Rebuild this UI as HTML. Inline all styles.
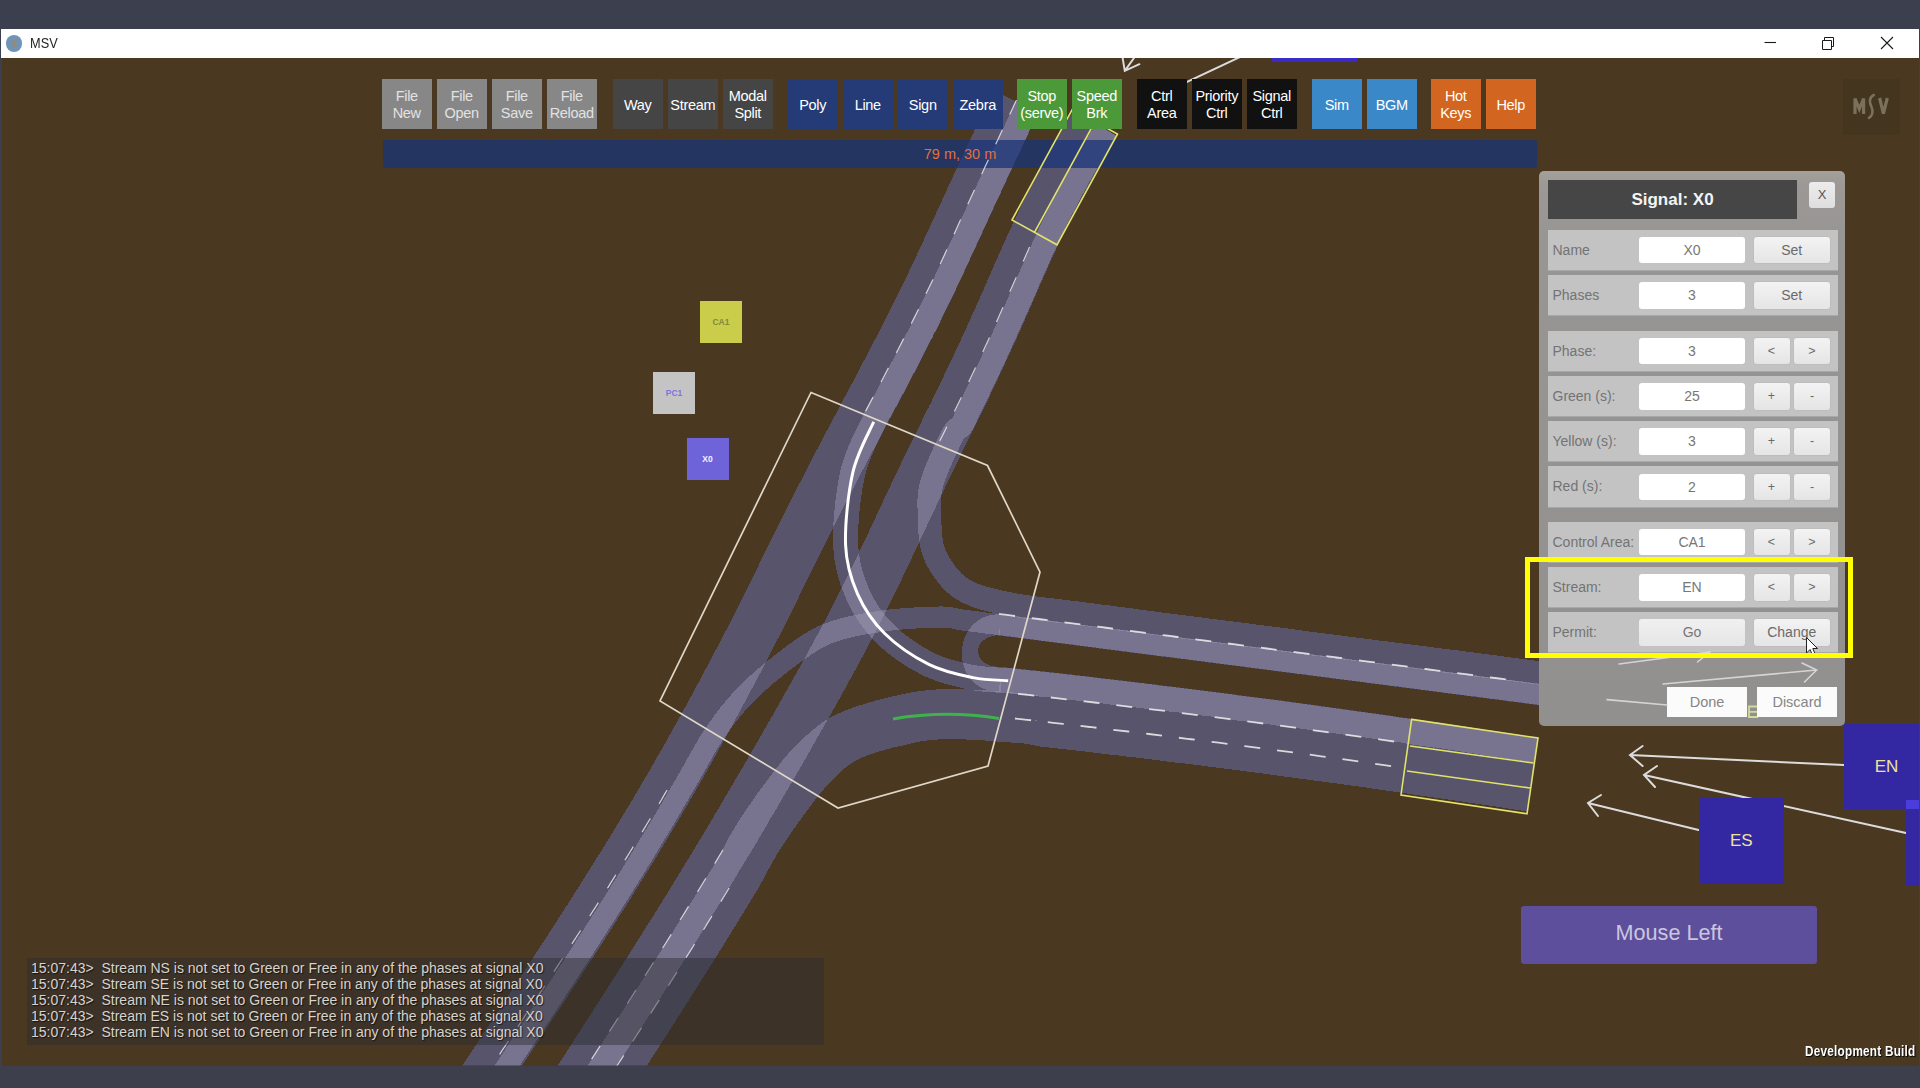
<!DOCTYPE html>
<html><head><meta charset="utf-8">
<style>
*{margin:0;padding:0;box-sizing:border-box}
html,body{width:1920px;height:1088px;overflow:hidden;background:#3c3f4e;font-family:"Liberation Sans",sans-serif}
.abs{position:absolute}
#title{left:1px;top:29px;width:1919px;height:29px;background:#fff}
#game{left:2px;top:58px;width:1917px;height:1007.5px;background:#4a3920;overflow:hidden}
#bottom{left:0;top:1065.5px;width:1920px;height:22.5px;background:#3d404c}
.tb{position:absolute;top:79px;width:49.5px;height:49.5px;padding-top:2.5px;color:#fff;font-size:14.5px;line-height:17px;text-align:center;display:flex;align-items:center;justify-content:center;letter-spacing:-0.3px}
.g1{background:#878787;color:#e2e2e2}
.g2{background:#454545}
.g3{background:#243b78}
.g4{background:#4c993a}
.g5{background:#111111}
.g6{background:#3a88c8}
.g7{background:#d2651f}
#bar{left:383px;top:140px;width:1154px;height:28px;background:rgba(26,52,120,0.75);border-radius:2px}
#bartxt{left:383px;top:140px;width:1154px;height:28px;color:#e0703a;font-size:14.5px;line-height:28px;text-align:center}

#panel{left:1539px;top:171px;width:306px;height:555px;background:linear-gradient(#a39f9b,#9c9895 14px,#989694 60px,#92908e);border-radius:5px}
#ptitle{left:1548px;top:179.5px;width:249px;height:39.5px;background:#474646;color:#f4f4f4;font-weight:bold;font-size:17px;line-height:39.5px;text-align:center}
#pclose{left:1809px;top:181.5px;width:26px;height:26px;background:linear-gradient(#ececec,#dedede);border-radius:3px;color:#555;font-size:13px;line-height:26px;text-align:center}
.row{position:absolute;left:1547.5px;width:290px;height:40.3px;background:#c3c3c3;box-shadow:0 1px 0 #a8a8a8}
.lab{position:absolute;left:5px;top:0;line-height:40.3px;font-size:14px;color:#737373}
.inp{position:absolute;left:91.5px;top:7.3px;width:106px;height:26.5px;background:#fff;border-radius:3px;color:#777;font-size:14px;line-height:26.5px;text-align:center}
.inp.go{background:linear-gradient(#f0f0f0,#e6e6e6)}
.btn{position:absolute;top:7.3px;height:26.5px;background:linear-gradient(#f3f3f3,#e5e5e5);border-radius:3px;color:#6a6a6a;font-size:14px;line-height:26.5px;text-align:center;box-shadow:0 0 0 0.5px #b8b8b8}
.w2{left:206px;width:76.5px}
.b1{left:206px;width:36px;font-size:12.5px}
.b2{left:246.5px;width:36px;font-size:12.5px}
.pb{position:absolute;top:687px;height:30px;width:80px;background:#fbfbfb;color:#868686;font-size:14.5px;line-height:30px;text-align:center}
#hl{left:1525px;top:557px;width:328px;height:101px;border:5.5px solid #ffff00}

.sq{position:absolute;width:42px;height:42px;font-size:8.5px;font-weight:bold;text-align:center;line-height:42px}
.blk{position:absolute;background:#3428a2;color:#ece39e;font-size:17px;text-align:center}
#log{left:26.5px;top:957.5px;width:797.5px;height:87.5px;background:rgba(44,44,50,0.45)}
#logt{left:31px;top:960px;font-size:14px;line-height:16px;color:#d8d4cc;text-shadow:1px 1px 1px rgba(0,0,0,0.6);white-space:pre}
#mouse{left:1521px;top:906px;width:296px;height:58px;background:#5e4f9d;border-radius:3px;color:#cac6de;font-size:21.6px;line-height:53px;text-align:center}
#dev{left:1805px;top:1042.8px;font-size:14.5px;font-weight:bold;color:#fff;transform:scaleX(0.81);transform-origin:0 0;text-shadow:1px 1px 1px #000;white-space:pre;letter-spacing:0.3px}
#logo{left:1843px;top:78.5px;width:57px;height:56px;background:#44351e}
</style></head><body>
<div id="title" class="abs">
  <div class="abs" style="left:4.5px;top:6px;width:16.5px;height:16.5px;border-radius:50%;background:#7094b5"><div style="position:absolute;left:5px;top:5px;width:6.5px;height:6.5px;border-radius:50%;background:#8c8c84"></div></div>
  <div class="abs" style="left:28.5px;top:6px;font-size:14.5px;color:#262626;transform:scaleX(0.88);transform-origin:0 0">MSV</div>
</div>
<div id="game" class="abs"></div>
<!--ROADS--><svg class="abs" style="left:0;top:0" width="1920" height="1088" viewBox="0 0 1920 1088">
<defs>
<clipPath id="gc"><rect x="2" y="58" width="1917" height="1007.5"/></clipPath>
<filter id="lv" filterUnits="userSpaceOnUse" x="0" y="58" width="1920" height="1008" color-interpolation-filters="sRGB">
<feColorMatrix type="matrix" values="0 0 0 1 0  0 0 0 1 0  0 0 0 1 0  0 0 0 0 1"/>
<feComponentTransfer>
<feFuncR type="discrete" tableValues="0.2902 0.2902 0.2902 0.2902 0.2902 0.2902 0.2902 0.2902 0.2902 0.2902 0.2902 0.2902 0.2902 0.2902 0.2902 0.2902 0.2902 0.2902 0.2902 0.2902 0.2902 0.2902 0.2902 0.2902 0.2902 0.3412 0.3412 0.3412 0.3412 0.3412 0.3412 0.3412 0.3412 0.3412 0.3412 0.3412 0.3412 0.3412 0.3412 0.3412 0.3412 0.3412 0.3412 0.3412 0.3412 0.3412 0.3412 0.3412 0.3412 0.3412 0.3412 0.3412 0.3412 0.3412 0.3412 0.3412 0.3412 0.3412 0.3412 0.3412 0.3412 0.3412 0.3412 0.3412 0.4706 0.4706 0.4706 0.4706 0.4706 0.4706 0.4706 0.4706 0.4706 0.4706 0.4706 0.4706 0.4706 0.4706 0.4706 0.4706 0.4706 0.4706 0.4706 0.5412 0.5412 0.5412 0.5412 0.5412 0.5412 0.5412 0.5412 0.5412 0.5412 0.5412 0.5412 0.5412 0.5412 0.5412 0.5412 0.5412"/>
<feFuncG type="discrete" tableValues="0.2235 0.2235 0.2235 0.2235 0.2235 0.2235 0.2235 0.2235 0.2235 0.2235 0.2235 0.2235 0.2235 0.2235 0.2235 0.2235 0.2235 0.2235 0.2235 0.2235 0.2235 0.2235 0.2235 0.2235 0.2235 0.3333 0.3333 0.3333 0.3333 0.3333 0.3333 0.3333 0.3333 0.3333 0.3333 0.3333 0.3333 0.3333 0.3333 0.3333 0.3333 0.3333 0.3333 0.3333 0.3333 0.3333 0.3333 0.3333 0.3333 0.3333 0.3333 0.3333 0.3333 0.3333 0.3333 0.3333 0.3333 0.3333 0.3333 0.3333 0.3333 0.3333 0.3333 0.3333 0.4588 0.4588 0.4588 0.4588 0.4588 0.4588 0.4588 0.4588 0.4588 0.4588 0.4588 0.4588 0.4588 0.4588 0.4588 0.4588 0.4588 0.4588 0.4588 0.5294 0.5294 0.5294 0.5294 0.5294 0.5294 0.5294 0.5294 0.5294 0.5294 0.5294 0.5294 0.5294 0.5294 0.5294 0.5294 0.5294"/>
<feFuncB type="discrete" tableValues="0.1255 0.1255 0.1255 0.1255 0.1255 0.1255 0.1255 0.1255 0.1255 0.1255 0.1255 0.1255 0.1255 0.1255 0.1255 0.1255 0.1255 0.1255 0.1255 0.1255 0.1255 0.1255 0.1255 0.1255 0.1255 0.4235 0.4235 0.4235 0.4235 0.4235 0.4235 0.4235 0.4235 0.4235 0.4235 0.4235 0.4235 0.4235 0.4235 0.4235 0.4235 0.4235 0.4235 0.4235 0.4235 0.4235 0.4235 0.4235 0.4235 0.4235 0.4235 0.4235 0.4235 0.4235 0.4235 0.4235 0.4235 0.4235 0.4235 0.4235 0.4235 0.4235 0.4235 0.4235 0.5647 0.5647 0.5647 0.5647 0.5647 0.5647 0.5647 0.5647 0.5647 0.5647 0.5647 0.5647 0.5647 0.5647 0.5647 0.5647 0.5647 0.5647 0.5647 0.6275 0.6275 0.6275 0.6275 0.6275 0.6275 0.6275 0.6275 0.6275 0.6275 0.6275 0.6275 0.6275 0.6275 0.6275 0.6275 0.6275"/>
</feComponentTransfer>
<feGaussianBlur stdDeviation="0.55"/>
</filter>
</defs>
<g clip-path="url(#gc)">
<g filter="url(#lv)"><g fill="none" stroke="#fff" stroke-opacity="0.52" stroke-linecap="butt" stroke-linejoin="round">
<path d="M1004.7,95.7 C1003.9,97.3 1001.6,102.3 1000.0,105.7 C998.4,109.0 996.9,112.3 995.3,115.7 C993.7,119.0 992.1,122.3 990.6,125.7 C989.0,129.0 987.5,132.3 985.9,135.6 C984.3,139.0 982.8,142.3 981.2,145.6 C979.6,149.0 978.1,152.3 976.5,155.6 C975.0,159.0 973.4,162.3 971.9,165.6 C970.3,169.0 968.7,172.3 967.2,175.7 C965.6,179.0 964.1,182.3 962.6,185.7 C961.0,189.0 959.5,192.3 957.9,195.7 C956.4,199.0 954.9,202.3 953.3,205.7 C951.8,209.0 950.3,212.3 948.7,215.7 C947.2,219.0 945.7,222.3 944.2,225.6 C942.6,229.0 941.1,232.3 939.6,235.6 C938.0,239.0 936.5,242.3 935.0,245.6 C933.4,248.9 931.9,252.2 930.3,255.6 C928.8,258.9 927.2,262.2 925.7,265.5 C924.1,268.8 922.5,272.1 921.0,275.4 C919.4,278.8 917.8,282.1 916.2,285.4 C914.6,288.7 913.0,292.0 911.4,295.3 C909.8,298.6 908.1,301.9 906.5,305.2 C904.8,308.5 903.2,311.9 901.5,315.2 C899.9,318.5 898.2,321.8 896.5,325.1 C894.8,328.4 893.1,331.7 891.4,335.0 C889.7,338.4 888.0,341.7 886.3,345.0 C884.6,348.3 882.8,351.6 881.1,355.0 C879.4,358.3 877.6,361.6 875.9,364.9 C874.1,368.2 872.4,371.6 870.6,374.9 C868.9,378.2 867.1,381.5 865.4,384.9 C863.6,388.2 861.8,391.5 860.1,394.8 C858.3,398.2 856.6,401.5 854.8,404.8 C853.0,408.2 851.3,411.5 849.5,414.8 C847.7,418.2 846.0,421.5 844.2,424.8 C842.4,428.2 840.7,431.5 838.9,434.8 C837.1,438.2 835.4,441.5 833.6,444.8 C831.9,448.2 830.1,451.5 828.4,454.8 C826.6,458.2 824.9,461.5 823.2,464.9 C821.4,468.2 819.7,471.5 818.0,474.9 C816.3,478.2 814.5,481.6 812.8,484.9 C811.1,488.2 809.4,491.6 807.7,494.9 C806.0,498.3 804.3,501.6 802.6,504.9 C800.9,508.3 799.2,511.6 797.5,515.0 C795.9,518.3 794.2,521.6 792.5,525.0 C790.9,528.3 789.2,531.7 787.5,535.0 C785.9,538.3 784.2,541.7 782.6,545.0 C780.9,548.3 779.3,551.7 777.6,555.0 C776.0,558.3 774.4,561.7 772.7,565.0 C771.1,568.3 769.4,571.7 767.8,575.0 C766.2,578.3 764.5,581.6 762.9,585.0 C761.3,588.3 759.6,591.6 758.0,594.9 C756.3,598.3 754.7,601.6 753.0,604.9 C751.3,608.2 749.7,611.5 748.0,614.8 C746.3,618.2 744.6,621.5 743.0,624.8 C741.3,628.1 739.6,631.4 737.9,634.7 C736.1,638.0 734.4,641.4 732.7,644.7 C731.0,648.0 729.3,651.3 727.5,654.6 C725.8,657.9 724.0,661.3 722.3,664.6 C720.5,667.9 718.8,671.2 717.0,674.5 C715.2,677.9 713.4,681.2 711.7,684.5 C709.9,687.8 708.1,691.1 706.3,694.4 C704.5,697.8 702.7,701.1 700.9,704.4 C699.1,707.7 697.3,711.0 695.4,714.4 C693.6,717.7 691.8,721.0 690.0,724.3 C688.1,727.6 686.3,731.0 684.4,734.3 C682.6,737.6 680.7,740.9 678.9,744.2 C677.0,747.5 675.1,750.9 673.3,754.2 C671.4,757.5 669.5,760.8 667.6,764.1 C665.7,767.4 663.8,770.8 661.9,774.1 C660.0,777.4 658.1,780.7 656.1,784.0 C654.2,787.3 652.3,790.6 650.3,794.0 C648.4,797.3 646.4,800.6 644.4,803.9 C642.5,807.2 640.5,810.5 638.5,813.9 C636.5,817.2 634.5,820.5 632.5,823.8 C630.5,827.1 628.5,830.4 626.5,833.8 C624.5,837.1 622.4,840.4 620.4,843.7 C618.4,847.0 616.3,850.3 614.3,853.7 C612.2,857.0 610.1,860.3 608.1,863.6 C606.0,866.9 603.9,870.3 601.9,873.6 C599.8,876.9 597.7,880.2 595.6,883.5 C593.5,886.9 591.4,890.2 589.3,893.5 C587.2,896.8 585.1,900.1 583.0,903.5 C580.9,906.8 578.8,910.1 576.6,913.4 C574.5,916.8 572.4,920.1 570.2,923.4 C568.1,926.7 566.0,930.1 563.8,933.4 C561.7,936.7 559.5,940.0 557.4,943.3 C555.2,946.7 553.1,950.0 550.9,953.3 C548.8,956.6 546.6,960.0 544.4,963.3 C542.3,966.6 540.1,970.0 537.9,973.3 C535.7,976.6 533.6,979.9 531.4,983.3 C529.2,986.6 527.0,989.9 524.9,993.2 C522.7,996.6 520.5,999.9 518.3,1003.2 C516.1,1006.5 513.9,1009.9 511.7,1013.2 C509.6,1016.5 507.4,1019.9 505.2,1023.2 C503.0,1026.5 500.8,1029.8 498.6,1033.2 C496.4,1036.5 494.2,1039.8 492.0,1043.2 C489.8,1046.5 487.6,1049.8 485.5,1053.2 C483.3,1056.5 481.1,1059.8 478.9,1063.1 C476.7,1066.5 474.5,1069.8 472.3,1073.1 C470.1,1076.5 466.8,1081.5 465.7,1083.1" stroke-width="25.0"/>
<path d="M1027.3,106.3 C1026.5,108.0 1024.2,113.0 1022.6,116.3 C1021.0,119.6 1019.5,123.0 1017.9,126.3 C1016.3,129.6 1014.8,133.0 1013.2,136.3 C1011.6,139.6 1010.1,142.9 1008.5,146.3 C1007.0,149.6 1005.4,152.9 1003.8,156.3 C1002.3,159.6 1000.7,162.9 999.2,166.2 C997.6,169.6 996.1,172.9 994.5,176.2 C993.0,179.5 991.4,182.9 989.9,186.2 C988.3,189.5 986.8,192.8 985.2,196.2 C983.7,199.5 982.2,202.8 980.6,206.1 C979.1,209.5 977.6,212.8 976.0,216.1 C974.5,219.4 973.0,222.8 971.5,226.1 C969.9,229.4 968.4,232.8 966.9,236.1 C965.3,239.4 963.8,242.8 962.3,246.1 C960.7,249.4 959.2,252.8 957.6,256.1 C956.1,259.4 954.5,262.8 953.0,266.1 C951.4,269.5 949.9,272.8 948.3,276.2 C946.7,279.5 945.1,282.8 943.5,286.2 C941.9,289.5 940.3,292.9 938.7,296.2 C937.1,299.6 935.5,302.9 933.8,306.3 C932.2,309.6 930.5,313.0 928.9,316.3 C927.2,319.7 925.5,323.0 923.9,326.4 C922.2,329.7 920.5,333.1 918.8,336.4 C917.1,339.8 915.4,343.1 913.7,346.5 C911.9,349.8 910.2,353.2 908.5,356.5 C906.7,359.8 905.0,363.2 903.3,366.5 C901.5,369.9 899.8,373.2 898.0,376.5 C896.3,379.9 894.5,383.2 892.8,386.5 C891.0,389.9 889.2,393.2 887.5,396.6 C885.7,399.9 883.9,403.2 882.2,406.6 C880.4,409.9 878.6,413.2 876.9,416.5 C875.1,419.9 873.3,423.2 871.6,426.5 C869.8,429.9 868.1,433.2 866.3,436.5 C864.5,439.8 862.8,443.2 861.0,446.5 C859.3,449.8 857.5,453.1 855.8,456.5 C854.0,459.8 852.3,463.1 850.5,466.4 C848.8,469.7 847.1,473.1 845.4,476.4 C843.6,479.7 841.9,483.0 840.2,486.4 C838.5,489.7 836.8,493.0 835.1,496.3 C833.4,499.6 831.7,503.0 830.0,506.3 C828.3,509.6 826.6,512.9 824.9,516.2 C823.2,519.6 821.6,522.9 819.9,526.2 C818.2,529.5 816.5,532.8 814.9,536.2 C813.2,539.5 811.6,542.8 809.9,546.1 C808.3,549.4 806.6,552.8 805.0,556.1 C803.3,559.4 801.7,562.7 800.1,566.1 C798.4,569.4 796.8,572.7 795.2,576.0 C793.5,579.4 791.9,582.7 790.2,586.0 C788.6,589.4 787.0,592.7 785.3,596.0 C783.7,599.4 782.0,602.7 780.4,606.1 C778.7,609.4 777.0,612.7 775.4,616.1 C773.7,619.4 772.0,622.8 770.3,626.1 C768.6,629.5 766.9,632.8 765.2,636.1 C763.5,639.5 761.8,642.8 760.1,646.2 C758.4,649.5 756.6,652.9 754.9,656.2 C753.2,659.6 751.4,662.9 749.7,666.2 C747.9,669.6 746.1,672.9 744.4,676.3 C742.6,679.6 740.8,683.0 739.0,686.3 C737.3,689.6 735.5,693.0 733.7,696.3 C731.9,699.7 730.1,703.0 728.3,706.3 C726.5,709.7 724.7,713.0 722.8,716.4 C721.0,719.7 719.2,723.0 717.4,726.4 C715.5,729.7 713.7,733.1 711.8,736.4 C710.0,739.8 708.1,743.1 706.3,746.4 C704.4,749.8 702.5,753.1 700.7,756.5 C698.8,759.8 696.9,763.2 695.0,766.5 C693.1,769.8 691.2,773.2 689.3,776.5 C687.4,779.9 685.5,783.2 683.5,786.6 C681.6,789.9 679.7,793.2 677.7,796.6 C675.8,799.9 673.8,803.3 671.9,806.6 C669.9,810.0 667.9,813.3 665.9,816.7 C663.9,820.0 661.9,823.4 659.9,826.7 C657.9,830.0 655.9,833.4 653.9,836.7 C651.9,840.1 649.9,843.4 647.8,846.8 C645.8,850.1 643.7,853.4 641.7,856.8 C639.6,860.1 637.6,863.5 635.5,866.8 C633.5,870.1 631.4,873.5 629.3,876.8 C627.2,880.2 625.1,883.5 623.1,886.8 C621.0,890.2 618.9,893.5 616.8,896.9 C614.7,900.2 612.6,903.5 610.4,906.9 C608.3,910.2 606.2,913.6 604.1,916.9 C602.0,920.2 599.8,923.6 597.7,926.9 C595.6,930.2 593.4,933.6 591.3,936.9 C589.1,940.3 587.0,943.6 584.8,946.9 C582.7,950.3 580.5,953.6 578.4,956.9 C576.2,960.3 574.0,963.6 571.9,966.9 C569.7,970.3 567.5,973.6 565.4,976.9 C563.2,980.3 561.0,983.6 558.9,986.9 C556.7,990.3 554.5,993.6 552.3,996.9 C550.1,1000.3 548.0,1003.6 545.8,1006.9 C543.6,1010.3 541.4,1013.6 539.2,1016.9 C537.0,1020.3 534.8,1023.6 532.6,1026.9 C530.5,1030.3 528.3,1033.6 526.1,1036.9 C523.9,1040.3 521.7,1043.6 519.5,1046.9 C517.3,1050.3 515.1,1053.6 512.9,1056.9 C510.7,1060.2 508.5,1063.6 506.3,1066.9 C504.1,1070.2 502.0,1073.6 499.8,1076.9 C497.6,1080.2 495.4,1083.5 493.2,1086.9 C491.0,1090.2 487.7,1095.2 486.6,1096.9" stroke-width="25.0"/>
<path d="M1084.3,116.7 C1083.3,118.4 1080.4,123.4 1078.5,126.7 C1076.6,130.0 1074.6,133.4 1072.7,136.7 C1070.8,140.0 1068.9,143.4 1067.0,146.7 C1065.0,150.1 1063.1,153.4 1061.3,156.7 C1059.4,160.1 1057.5,163.4 1055.7,166.8 C1053.8,170.2 1052.0,173.5 1050.1,176.9 C1048.3,180.2 1046.5,183.6 1044.8,187.0 C1043.0,190.3 1041.3,193.7 1039.5,197.1 C1037.8,200.5 1036.2,203.8 1034.5,207.2 C1032.8,210.6 1031.2,213.9 1029.6,217.3 C1028.0,220.7 1026.4,224.0 1024.9,227.4 C1023.3,230.7 1021.8,234.1 1020.2,237.4 C1018.7,240.8 1017.2,244.1 1015.7,247.5 C1014.2,250.8 1012.7,254.2 1011.3,257.5 C1009.8,260.8 1008.3,264.2 1006.9,267.5 C1005.4,270.8 1003.9,274.2 1002.5,277.5 C1001.0,280.8 999.6,284.1 998.1,287.5 C996.7,290.8 995.2,294.1 993.7,297.4 C992.3,300.7 990.8,304.0 989.3,307.3 C987.9,310.6 986.4,313.9 984.9,317.3 C983.4,320.6 981.9,323.9 980.4,327.2 C978.9,330.5 977.4,333.8 975.9,337.1 C974.3,340.4 972.8,343.7 971.3,347.0 C969.8,350.3 968.2,353.7 966.7,357.0 C965.1,360.3 963.6,363.6 962.0,366.9 C960.4,370.2 958.9,373.5 957.3,376.8 C955.7,380.1 954.1,383.4 952.5,386.7 C950.9,390.0 949.3,393.3 947.7,396.7 C946.1,400.0 944.5,403.3 942.9,406.6 C941.2,409.9 939.6,413.2 938.0,416.5 C936.3,419.9 934.7,423.2 933.0,426.5 C931.4,429.8 929.7,433.2 928.1,436.5 C926.5,439.8 924.8,443.1 923.2,446.5 C921.6,449.8 919.9,453.2 918.3,456.5 C916.7,459.8 915.1,463.2 913.5,466.5 C911.9,469.8 910.3,473.2 908.7,476.5 C907.1,479.8 905.5,483.2 903.9,486.5 C902.4,489.8 900.8,493.2 899.2,496.5 C897.7,499.8 896.1,503.2 894.5,506.5 C893.0,509.8 891.4,513.1 889.9,516.4 C888.3,519.8 886.7,523.1 885.2,526.4 C883.6,529.7 882.1,533.1 880.5,536.4 C878.9,539.7 877.4,543.0 875.8,546.3 C874.2,549.6 872.6,552.9 871.1,556.3 C869.5,559.6 867.9,562.9 866.3,566.2 C864.7,569.5 863.1,572.8 861.5,576.1 C859.9,579.4 858.3,582.7 856.6,586.0 C855.0,589.3 853.4,592.6 851.7,595.9 C850.1,599.2 848.4,602.5 846.7,605.8 C845.0,609.1 843.4,612.4 841.6,615.7 C839.9,619.0 838.2,622.3 836.5,625.6 C834.8,628.9 833.0,632.2 831.2,635.5 C829.5,638.8 827.7,642.1 825.9,645.4 C824.1,648.7 822.3,652.0 820.5,655.3 C818.7,658.6 816.9,661.9 815.1,665.3 C813.2,668.6 811.4,671.9 809.6,675.2 C807.7,678.5 805.9,681.8 804.0,685.1 C802.2,688.4 800.3,691.8 798.4,695.1 C796.6,698.4 794.7,701.7 792.8,705.0 C790.9,708.3 789.1,711.7 787.2,715.0 C785.3,718.3 783.4,721.6 781.5,724.9 C779.6,728.2 777.7,731.6 775.8,734.9 C773.9,738.2 772.0,741.5 770.1,744.8 C768.2,748.1 766.3,751.5 764.4,754.8 C762.5,758.1 760.5,761.4 758.6,764.7 C756.7,768.0 754.8,771.4 752.8,774.7 C750.9,778.0 749.0,781.3 747.0,784.6 C745.1,787.9 743.1,791.3 741.2,794.6 C739.2,797.9 737.3,801.2 735.3,804.5 C733.4,807.8 731.4,811.2 729.5,814.5 C727.5,817.8 725.5,821.1 723.6,824.4 C721.6,827.7 719.6,831.1 717.6,834.4 C715.7,837.7 713.7,841.0 711.7,844.3 C709.7,847.6 707.7,850.9 705.7,854.3 C703.7,857.6 701.7,860.9 699.7,864.2 C697.7,867.5 695.7,870.8 693.7,874.1 C691.7,877.5 689.6,880.8 687.6,884.1 C685.6,887.4 683.5,890.7 681.5,894.0 C679.5,897.3 677.4,900.7 675.4,904.0 C673.3,907.3 671.2,910.6 669.2,913.9 C667.1,917.2 665.0,920.6 663.0,923.9 C660.9,927.2 658.8,930.5 656.7,933.8 C654.7,937.1 652.6,940.4 650.5,943.8 C648.4,947.1 646.3,950.4 644.2,953.7 C642.1,957.0 640.0,960.4 637.9,963.7 C635.8,967.0 633.7,970.3 631.6,973.6 C629.4,976.9 627.3,980.3 625.2,983.6 C623.1,986.9 621.0,990.2 618.9,993.5 C616.7,996.9 614.6,1000.2 612.5,1003.5 C610.4,1006.8 608.2,1010.1 606.1,1013.5 C604.0,1016.8 601.8,1020.1 599.7,1023.4 C597.6,1026.8 595.4,1030.1 593.3,1033.4 C591.2,1036.7 589.0,1040.0 586.9,1043.4 C584.8,1046.7 582.6,1050.0 580.5,1053.3 C578.4,1056.7 576.2,1060.0 574.1,1063.3 C572.0,1066.6 569.8,1070.0 567.7,1073.3 C565.6,1076.6 562.4,1081.6 561.3,1083.3" stroke-width="25.0"/>
<path d="M1105.9,129.3 C1104.9,130.9 1102.0,135.9 1100.1,139.2 C1098.2,142.6 1096.3,145.9 1094.4,149.2 C1092.5,152.5 1090.6,155.8 1088.7,159.1 C1086.8,162.4 1084.9,165.7 1083.0,169.0 C1081.2,172.3 1079.4,175.6 1077.5,178.9 C1075.7,182.2 1073.9,185.5 1072.1,188.8 C1070.4,192.0 1068.6,195.3 1066.9,198.6 C1065.2,201.9 1063.5,205.1 1061.8,208.4 C1060.2,211.7 1058.6,215.0 1056.9,218.2 C1055.3,221.5 1053.7,224.8 1052.2,228.1 C1050.6,231.4 1049.1,234.6 1047.5,237.9 C1046.0,241.2 1044.5,244.5 1043.0,247.8 C1041.5,251.1 1040.0,254.4 1038.5,257.7 C1037.0,261.0 1035.6,264.3 1034.1,267.6 C1032.7,270.9 1031.2,274.2 1029.7,277.6 C1028.3,280.9 1026.8,284.2 1025.4,287.5 C1023.9,290.8 1022.5,294.2 1021.0,297.5 C1019.5,300.8 1018.1,304.2 1016.6,307.5 C1015.1,310.8 1013.6,314.2 1012.2,317.5 C1010.7,320.8 1009.2,324.2 1007.7,327.5 C1006.2,330.8 1004.7,334.2 1003.2,337.5 C1001.6,340.9 1000.1,344.2 998.6,347.5 C997.1,350.9 995.5,354.2 994.0,357.5 C992.4,360.9 990.9,364.2 989.3,367.6 C987.8,370.9 986.2,374.2 984.6,377.6 C983.0,380.9 981.5,384.2 979.9,387.6 C978.3,390.9 976.7,394.3 975.1,397.6 C973.4,400.9 971.8,404.3 970.2,407.6 C968.6,410.9 966.9,414.3 965.3,417.6 C963.7,421.0 962.0,424.3 960.4,427.6 C958.7,430.9 957.1,434.3 955.4,437.6 C953.8,440.9 952.2,444.2 950.5,447.5 C948.9,450.9 947.3,454.2 945.6,457.5 C944.0,460.8 942.4,464.1 940.8,467.4 C939.2,470.7 937.6,474.0 936.0,477.3 C934.4,480.6 932.8,483.9 931.3,487.3 C929.7,490.6 928.1,493.9 926.5,497.2 C925.0,500.5 923.4,503.8 921.9,507.2 C920.3,510.5 918.7,513.8 917.2,517.1 C915.6,520.4 914.0,523.8 912.5,527.1 C910.9,530.4 909.4,533.7 907.8,537.1 C906.2,540.4 904.7,543.7 903.1,547.0 C901.5,550.4 900.0,553.7 898.4,557.0 C896.8,560.4 895.2,563.7 893.6,567.0 C892.0,570.4 890.4,573.7 888.8,577.0 C887.2,580.4 885.6,583.7 884.0,587.1 C882.3,590.4 880.7,593.7 879.0,597.1 C877.4,600.4 875.7,603.8 874.1,607.1 C872.4,610.5 870.7,613.8 869.0,617.1 C867.3,620.5 865.6,623.8 863.9,627.2 C862.1,630.5 860.4,633.9 858.6,637.2 C856.9,640.6 855.1,643.9 853.3,647.3 C851.5,650.6 849.7,654.0 847.9,657.3 C846.1,660.6 844.3,664.0 842.5,667.3 C840.6,670.7 838.8,674.0 837.0,677.3 C835.1,680.7 833.3,684.0 831.4,687.3 C829.6,690.7 827.7,694.0 825.8,697.3 C824.0,700.7 822.1,704.0 820.2,707.3 C818.3,710.7 816.5,714.0 814.6,717.3 C812.7,720.7 810.8,724.0 808.9,727.3 C807.0,730.6 805.1,734.0 803.2,737.3 C801.3,740.6 799.4,744.0 797.5,747.3 C795.6,750.6 793.7,754.0 791.8,757.3 C789.9,760.6 787.9,763.9 786.0,767.3 C784.1,770.6 782.2,773.9 780.2,777.3 C778.3,780.6 776.4,783.9 774.4,787.2 C772.5,790.6 770.6,793.9 768.6,797.2 C766.7,800.6 764.7,803.9 762.8,807.2 C760.8,810.6 758.8,813.9 756.9,817.2 C754.9,820.5 753.0,823.9 751.0,827.2 C749.0,830.5 747.0,833.9 745.1,837.2 C743.1,840.5 741.1,843.8 739.1,847.2 C737.1,850.5 735.1,853.8 733.1,857.2 C731.1,860.5 729.1,863.8 727.1,867.2 C725.1,870.5 723.1,873.8 721.1,877.2 C719.1,880.5 717.1,883.8 715.0,887.2 C713.0,890.5 711.0,893.8 708.9,897.1 C706.9,900.5 704.8,903.8 702.8,907.1 C700.7,910.5 698.7,913.8 696.6,917.1 C694.5,920.5 692.5,923.8 690.4,927.1 C688.3,930.5 686.3,933.8 684.2,937.1 C682.1,940.5 680.0,943.8 677.9,947.1 C675.8,950.4 673.7,953.8 671.6,957.1 C669.5,960.4 667.4,963.8 665.3,967.1 C663.2,970.4 661.1,973.7 659.0,977.1 C656.9,980.4 654.8,983.7 652.6,987.1 C650.5,990.4 648.4,993.7 646.3,997.0 C644.2,1000.4 642.0,1003.7 639.9,1007.0 C637.8,1010.3 635.7,1013.7 633.5,1017.0 C631.4,1020.3 629.3,1023.6 627.1,1027.0 C625.0,1030.3 622.9,1033.6 620.7,1036.9 C618.6,1040.3 616.5,1043.6 614.3,1046.9 C612.2,1050.2 610.1,1053.6 607.9,1056.9 C605.8,1060.2 603.7,1063.5 601.5,1066.8 C599.4,1070.2 597.3,1073.5 595.1,1076.8 C593.0,1080.1 590.9,1083.5 588.7,1086.8 C586.6,1090.1 583.4,1095.1 582.4,1096.7" stroke-width="25.0"/>
<path d="M1027.3,106.3 C1026.5,108.0 1024.2,113.0 1022.6,116.3 C1021.1,119.6 1019.5,122.9 1017.9,126.3 C1016.4,129.6 1014.8,132.9 1013.2,136.2 C1011.7,139.5 1010.1,142.9 1008.6,146.2 C1007.0,149.5 1005.4,152.8 1003.9,156.1 C1002.3,159.5 1000.8,162.8 999.2,166.1 C997.7,169.4 996.1,172.7 994.6,176.0 C993.0,179.4 991.5,182.7 990.0,186.0 C988.4,189.3 986.9,192.6 985.3,196.0 C983.8,199.3 982.3,202.6 980.7,205.9 C979.2,209.2 977.7,212.5 976.2,215.9 C974.6,219.2 973.1,222.5 971.6,225.8 C970.1,229.1 968.5,232.5 967.0,235.8 C965.5,239.1 964.0,242.4 962.4,245.8 C960.9,249.1 959.3,252.4 957.8,255.8 C956.3,259.1 954.7,262.4 953.2,265.8 C951.6,269.1 950.0,272.4 948.5,275.8 C946.9,279.1 945.3,282.4 943.7,285.8 C942.1,289.1 940.5,292.5 938.9,295.8 C937.3,299.1 935.7,302.5 934.1,305.8 C932.4,309.2 930.8,312.5 929.1,315.9 C927.5,319.2 925.8,322.5 924.1,325.9 C922.4,329.2 920.8,332.6 919.1,335.9 C917.4,339.2 915.7,342.6 913.9,345.9 C912.2,349.2 910.5,352.6 908.8,355.9 C907.1,359.2 905.3,362.6 903.6,365.9 C901.8,369.2 900.1,372.6 898.4,375.9 C896.6,379.2 894.9,382.6 893.1,385.9 C891.3,389.2 889.6,392.6 887.8,395.9 C886.1,399.2 884.9,401.5 882.5,405.9 C880.2,410.2 878.7,410.7 873.7,421.8 C868.7,432.9 857.5,452.0 852.8,472.6 C848.1,493.2 844.8,525.1 845.6,545.3 C846.4,565.5 851.0,579.1 857.5,593.8 C864.0,608.5 872.8,621.7 884.7,633.5 C896.6,645.3 914.1,657.0 928.8,664.4 C943.5,671.8 959.8,674.9 973.0,677.6 C986.2,680.3 997.0,679.7 1008.2,680.7 C1019.4,681.7 1031.4,682.9 1040.0,683.8 C1048.6,684.7 1053.2,685.3 1059.9,686.0 C1066.5,686.8 1073.1,687.6 1079.7,688.3 C1086.3,689.1 1093.0,689.9 1099.6,690.6 C1106.2,691.4 1112.8,692.2 1119.5,693.0 C1126.1,693.8 1132.7,694.6 1139.3,695.4 C1145.9,696.2 1152.6,697.0 1159.2,697.8 C1165.8,698.6 1172.4,699.4 1179.0,700.2 C1185.7,701.1 1192.3,701.9 1198.9,702.7 C1205.5,703.6 1212.2,704.4 1218.8,705.2 C1225.4,706.1 1232.0,706.9 1238.6,707.8 C1245.3,708.7 1251.9,709.5 1258.5,710.4 C1265.1,711.3 1271.7,712.1 1278.4,713.0 C1285.0,713.9 1291.6,714.8 1298.2,715.7 C1304.8,716.6 1311.5,717.5 1318.1,718.4 C1324.7,719.3 1331.3,720.2 1338.0,721.1 C1344.6,722.0 1351.2,722.9 1357.8,723.8 C1364.4,724.8 1371.1,725.7 1377.7,726.6 C1384.3,727.6 1390.9,728.5 1397.5,729.5 C1404.2,730.4 1410.8,731.4 1417.4,732.3 C1424.0,733.3 1430.6,734.3 1437.3,735.2 C1443.9,736.2 1450.5,737.2 1457.1,738.2 C1463.8,739.1 1470.4,740.1 1477.0,741.1 C1483.6,742.1 1490.2,743.1 1496.9,744.1 C1503.5,745.1 1510.1,746.1 1516.7,747.2 C1523.3,748.2 1533.3,749.7 1536.6,750.2" stroke-width="25.0"/>
<path d="M1560.0,675.6 C1556.7,675.2 1547.0,673.9 1540.4,673.1 C1533.9,672.2 1527.4,671.4 1520.9,670.6 C1514.3,669.7 1507.8,668.9 1501.3,668.0 C1494.8,667.2 1488.3,666.4 1481.7,665.5 C1475.2,664.7 1468.7,663.8 1462.2,663.0 C1455.7,662.1 1449.1,661.3 1442.6,660.5 C1436.1,659.6 1429.6,658.8 1423.0,657.9 C1416.5,657.1 1410.0,656.2 1403.5,655.4 C1397.0,654.6 1390.4,653.7 1383.9,652.9 C1377.4,652.0 1370.9,651.2 1364.3,650.4 C1357.8,649.5 1351.3,648.7 1344.8,647.8 C1338.3,647.0 1331.7,646.1 1325.2,645.3 C1318.7,644.5 1312.2,643.6 1305.7,642.8 C1299.1,641.9 1292.6,641.1 1286.1,640.2 C1279.6,639.4 1273.0,638.6 1266.5,637.7 C1260.0,636.9 1253.5,636.0 1247.0,635.2 C1240.4,634.3 1233.9,633.5 1227.4,632.7 C1220.9,631.8 1214.3,631.0 1207.8,630.1 C1201.3,629.3 1194.8,628.5 1188.3,627.6 C1181.7,626.8 1175.2,625.9 1168.7,625.1 C1162.2,624.2 1155.7,623.4 1149.1,622.6 C1142.6,621.7 1136.1,620.9 1129.6,620.0 C1123.0,619.2 1118.3,618.6 1110.0,617.5 C1101.7,616.4 1095.3,615.6 1080.0,613.6 C1064.7,611.6 1034.9,608.5 1018.0,605.6 C1001.1,602.7 988.6,599.9 978.4,596.5 C968.2,593.1 963.1,590.2 956.8,585.1 C950.5,580.0 944.7,572.3 940.6,565.8 C936.5,559.3 933.9,554.5 932.0,546.0 C930.1,537.5 929.6,525.3 929.5,515.0 C929.4,504.7 927.8,497.2 931.5,484.0 C935.2,470.8 947.0,445.7 952.0,436.0 C957.0,426.3 959.0,428.9 961.4,425.5 C963.8,422.1 964.7,418.9 966.3,415.6 C967.9,412.3 969.5,409.0 971.1,405.7 C972.8,402.4 974.4,399.0 976.0,395.7 C977.6,392.4 979.1,389.1 980.7,385.8 C982.3,382.5 983.9,379.1 985.4,375.8 C987.0,372.5 988.6,369.2 990.1,365.9 C991.6,362.6 993.2,359.3 994.7,355.9 C996.2,352.6 997.8,349.3 999.3,346.0 C1000.8,342.7 1002.3,339.4 1003.8,336.1 C1005.3,332.7 1006.8,329.4 1008.3,326.1 C1009.8,322.8 1011.3,319.5 1012.7,316.2 C1014.2,312.9 1015.7,309.6 1017.2,306.2 C1018.6,302.9 1020.1,299.6 1021.5,296.3 C1023.0,293.0 1024.4,289.7 1025.9,286.4 C1027.3,283.1 1028.7,279.8 1030.2,276.5 C1031.6,273.2 1033.1,269.9 1034.5,266.7 C1036.0,263.4 1037.5,260.1 1038.9,256.8 C1040.4,253.5 1041.9,250.3 1043.4,247.0 C1044.9,243.7 1046.4,240.4 1047.9,237.2 C1049.4,233.9 1050.9,230.6 1052.5,227.4 C1054.1,224.1 1055.6,220.9 1057.2,217.6 C1058.8,214.4 1060.5,211.1 1062.1,207.9 C1063.8,204.6 1065.5,201.4 1067.2,198.1 C1068.9,194.9 1070.6,191.6 1072.4,188.3 C1074.1,185.1 1075.9,181.8 1077.7,178.5 C1079.5,175.3 1081.4,172.0 1083.2,168.7 C1085.0,165.5 1086.9,162.2 1088.8,158.9 C1090.7,155.6 1092.5,152.3 1094.4,149.0 C1096.3,145.8 1098.2,142.5 1100.2,139.2 C1102.1,135.9 1104.9,130.9 1105.9,129.3" stroke-width="23.5"/>
<path d="M1560.0,697.1 C1556.8,696.7 1547.1,695.4 1540.6,694.6 C1534.2,693.8 1527.7,693.0 1521.3,692.1 C1514.8,691.3 1508.4,690.5 1501.9,689.6 C1495.5,688.8 1489.0,688.0 1482.6,687.1 C1476.1,686.3 1469.7,685.5 1463.2,684.6 C1456.8,683.8 1450.3,683.0 1443.9,682.1 C1437.4,681.3 1431.0,680.5 1424.5,679.6 C1418.1,678.8 1411.6,678.0 1405.2,677.1 C1398.7,676.3 1392.3,675.5 1385.8,674.6 C1379.4,673.8 1372.9,673.0 1366.5,672.1 C1360.0,671.3 1353.5,670.5 1347.1,669.6 C1340.6,668.8 1334.2,668.0 1327.7,667.1 C1321.3,666.3 1314.8,665.5 1308.4,664.6 C1301.9,663.8 1295.5,663.0 1289.0,662.1 C1282.6,661.3 1276.1,660.5 1269.7,659.6 C1263.2,658.8 1256.8,658.0 1250.3,657.1 C1243.9,656.3 1237.4,655.5 1231.0,654.6 C1224.5,653.8 1218.1,653.0 1211.6,652.1 C1205.2,651.3 1198.7,650.5 1192.3,649.6 C1185.8,648.8 1179.4,648.0 1172.9,647.1 C1166.5,646.3 1160.0,645.5 1153.5,644.6 C1147.1,643.8 1140.6,643.0 1134.2,642.1 C1127.7,641.3 1121.3,640.5 1114.8,639.6 C1108.4,638.8 1101.9,638.0 1095.5,637.1 C1089.0,636.3 1082.6,635.5 1076.1,634.6 C1069.7,633.8 1063.2,633.0 1056.8,632.1 C1050.3,631.3 1043.9,630.5 1037.4,629.6 C1031.0,628.8 1024.5,628.0 1018.1,627.1 C1011.6,626.3 1005.2,625.5 998.7,624.6 C992.3,623.8 985.8,623.0 979.4,622.1 C972.9,621.3 966.6,620.5 960.0,619.6 C953.4,618.8 953.3,616.7 940.0,617.1 C926.7,617.4 899.1,618.6 880.0,621.5 C860.9,624.4 842.1,627.3 825.4,634.5 C808.6,641.7 793.3,654.2 779.5,664.8 C765.7,675.3 753.5,686.5 742.7,697.8 C732.0,709.1 722.9,721.3 715.0,732.7 C707.1,744.1 699.4,759.0 695.2,766.2 C691.0,773.4 691.5,772.7 689.7,775.9 C687.8,779.2 685.9,782.4 684.1,785.7 C682.2,788.9 680.3,792.2 678.4,795.4 C676.5,798.7 674.6,801.9 672.7,805.2 C670.8,808.4 668.9,811.7 667.0,814.9 C665.0,818.2 663.1,821.4 661.2,824.6 C659.2,827.9 657.3,831.1 655.3,834.4 C653.4,837.6 651.4,840.9 649.4,844.1 C647.4,847.4 645.5,850.6 643.5,853.9 C641.5,857.1 639.5,860.4 637.5,863.6 C635.5,866.9 633.5,870.1 631.5,873.4 C629.5,876.6 627.4,879.8 625.4,883.1 C623.4,886.3 621.3,889.6 619.3,892.8 C617.3,896.1 615.2,899.3 613.2,902.6 C611.1,905.8 609.1,909.0 607.0,912.3 C604.9,915.5 602.9,918.8 600.8,922.0 C598.7,925.3 596.7,928.5 594.6,931.7 C592.5,935.0 590.4,938.2 588.3,941.5 C586.3,944.7 584.2,948.0 582.1,951.2 C580.0,954.4 577.9,957.7 575.8,960.9 C573.7,964.2 571.6,967.4 569.5,970.6 C567.4,973.9 565.3,977.1 563.2,980.4 C561.0,983.6 558.9,986.8 556.8,990.1 C554.7,993.3 552.6,996.6 550.5,999.8 C548.3,1003.0 546.2,1006.3 544.1,1009.5 C542.0,1012.7 539.8,1016.0 537.7,1019.2 C535.6,1022.5 533.5,1025.7 531.3,1028.9 C529.2,1032.2 527.1,1035.4 524.9,1038.6 C522.8,1041.9 520.7,1045.1 518.6,1048.3 C516.4,1051.6 514.3,1054.8 512.2,1058.1 C510.0,1061.3 507.9,1064.5 505.8,1067.8 C503.6,1071.0 501.5,1074.2 499.4,1077.5 C497.3,1080.7 495.1,1083.9 493.0,1087.2 C490.9,1090.4 487.7,1095.2 486.6,1096.9" stroke-width="21.0"/>
<path d="M582.4,1096.7 C583.4,1095.1 586.5,1090.4 588.5,1087.2 C590.5,1084.0 592.6,1080.8 594.6,1077.6 C596.7,1074.4 598.7,1071.2 600.8,1068.0 C602.8,1064.8 604.9,1061.6 606.9,1058.4 C609.0,1055.2 611.1,1052.0 613.1,1048.8 C615.2,1045.6 617.2,1042.4 619.3,1039.3 C621.3,1036.1 623.4,1032.9 625.4,1029.7 C627.5,1026.5 629.5,1023.3 631.6,1020.1 C633.6,1016.9 635.6,1013.7 637.7,1010.5 C639.7,1007.3 641.8,1004.1 643.8,1000.9 C645.9,997.7 647.9,994.5 649.9,991.3 C652.0,988.1 654.0,984.9 656.0,981.7 C658.1,978.5 660.1,975.3 662.1,972.1 C664.2,968.9 666.2,965.7 668.2,962.5 C670.2,959.3 672.3,956.1 674.3,952.9 C676.3,949.7 678.3,946.5 680.3,943.3 C682.3,940.1 684.3,936.9 686.3,933.7 C688.3,930.5 690.3,927.3 692.3,924.1 C694.3,920.9 696.3,917.7 698.2,914.5 C700.2,911.3 702.2,908.1 704.2,904.9 C706.1,901.7 708.1,898.5 710.1,895.3 C712.0,892.1 714.0,888.9 715.9,885.7 C717.9,882.5 719.8,879.3 721.8,876.1 C723.7,872.9 723.4,873.8 727.6,866.5 C731.7,859.1 739.0,844.3 746.7,831.9 C754.4,819.6 764.3,805.2 773.7,792.5 C783.1,779.9 792.2,767.1 803.1,756.2 C814.0,745.3 824.4,734.7 839.2,726.9 C854.0,719.1 874.5,713.6 892.1,709.3 C909.6,705.1 923.0,702.1 944.5,701.5 C965.9,700.9 1004.7,704.3 1020.7,705.5 C1036.6,706.7 1033.5,707.9 1040.0,708.8 C1046.5,709.7 1053.1,710.3 1059.7,711.0 C1066.3,711.8 1072.8,712.5 1079.4,713.3 C1086.0,714.0 1092.5,714.8 1099.1,715.6 C1105.7,716.4 1112.3,717.1 1118.8,717.9 C1125.4,718.7 1132.0,719.5 1138.5,720.3 C1145.1,721.1 1151.7,721.9 1158.2,722.7 C1164.8,723.5 1171.4,724.3 1177.9,725.1 C1184.5,725.9 1191.1,726.7 1197.6,727.6 C1204.2,728.4 1210.8,729.2 1217.3,730.1 C1223.9,730.9 1230.5,731.7 1237.1,732.6 C1243.6,733.4 1250.2,734.3 1256.8,735.2 C1263.3,736.0 1269.9,736.9 1276.5,737.8 C1283.0,738.6 1289.6,739.5 1296.2,740.4 C1302.7,741.3 1309.3,742.2 1315.9,743.1 C1322.4,743.9 1329.0,744.8 1335.6,745.8 C1342.2,746.7 1348.7,747.6 1355.3,748.5 C1361.9,749.4 1368.4,750.3 1375.0,751.3 C1381.6,752.2 1388.1,753.1 1394.7,754.1 C1401.3,755.0 1407.8,755.9 1414.4,756.9 C1421.0,757.8 1427.5,758.8 1434.1,759.8 C1440.7,760.7 1447.2,761.7 1453.8,762.7 C1460.4,763.6 1467.0,764.6 1473.5,765.6 C1480.1,766.6 1486.7,767.6 1493.2,768.6 C1499.8,769.6 1506.4,770.6 1512.9,771.6 C1519.5,772.6 1529.4,774.1 1532.6,774.6" stroke-width="25.0"/>
<path d="M603.4,1110.2 C604.4,1108.6 607.5,1103.8 609.5,1100.7 C611.6,1097.5 613.6,1094.3 615.7,1091.1 C617.7,1087.9 619.8,1084.7 621.8,1081.5 C623.9,1078.3 625.9,1075.1 628.0,1071.9 C630.0,1068.7 632.1,1065.5 634.1,1062.3 C636.2,1059.2 638.2,1056.0 640.3,1052.8 C642.3,1049.6 644.4,1046.4 646.5,1043.2 C648.5,1040.0 650.6,1036.8 652.6,1033.6 C654.7,1030.4 656.7,1027.2 658.8,1024.0 C660.8,1020.8 662.8,1017.6 664.9,1014.3 C666.9,1011.1 669.0,1007.9 671.0,1004.7 C673.1,1001.5 675.1,998.3 677.1,995.1 C679.2,991.9 681.2,988.7 683.3,985.5 C685.3,982.3 687.3,979.1 689.3,975.9 C691.4,972.7 693.4,969.4 695.4,966.2 C697.4,963.0 699.5,959.8 701.5,956.6 C703.5,953.4 705.5,950.2 707.5,946.9 C709.5,943.7 711.5,940.5 713.5,937.3 C715.5,934.1 717.5,930.9 719.5,927.6 C721.5,924.4 723.5,921.2 725.5,918.0 C727.4,914.8 729.4,911.5 731.4,908.3 C733.4,905.1 735.3,901.9 737.3,898.7 C739.2,895.4 741.2,892.2 743.1,889.0 C745.1,885.8 744.9,886.5 749.0,879.4 C753.0,872.2 759.9,858.0 767.3,846.1 C774.8,834.1 784.8,819.5 793.7,807.5 C802.7,795.4 811.4,783.5 820.9,773.8 C830.4,764.1 838.0,755.8 850.8,749.1 C863.6,742.4 882.2,737.4 897.9,733.7 C913.6,729.9 924.9,727.0 945.1,726.5 C965.4,726.0 1003.5,729.3 1019.3,730.5 C1035.1,731.7 1033.3,732.9 1040.0,733.8 C1046.7,734.7 1053.0,735.3 1059.5,736.0 C1066.1,736.8 1072.6,737.5 1079.1,738.3 C1085.6,739.0 1092.1,739.8 1098.6,740.5 C1105.2,741.3 1111.7,742.1 1118.2,742.8 C1124.7,743.6 1131.2,744.4 1137.7,745.2 C1144.3,746.0 1150.8,746.8 1157.3,747.6 C1163.8,748.4 1170.3,749.2 1176.8,750.0 C1183.3,750.8 1189.9,751.6 1196.4,752.4 C1202.9,753.2 1209.4,754.0 1215.9,754.9 C1222.4,755.7 1229.0,756.5 1235.5,757.4 C1242.0,758.2 1248.5,759.1 1255.0,759.9 C1261.5,760.8 1268.1,761.6 1274.6,762.5 C1281.1,763.4 1287.6,764.2 1294.1,765.1 C1300.6,766.0 1307.1,766.9 1313.7,767.8 C1320.2,768.6 1326.7,769.5 1333.2,770.4 C1339.7,771.3 1346.2,772.2 1352.8,773.1 C1359.3,774.0 1365.8,775.0 1372.3,775.9 C1378.8,776.8 1385.3,777.7 1391.9,778.6 C1398.4,779.6 1404.9,780.5 1411.4,781.5 C1417.9,782.4 1424.4,783.3 1431.0,784.3 C1437.5,785.2 1444.0,786.2 1450.5,787.2 C1457.0,788.1 1463.5,789.1 1470.0,790.1 C1476.6,791.1 1483.1,792.0 1489.6,793.0 C1496.1,794.0 1502.6,795.0 1509.1,796.0 C1515.7,797.0 1525.4,798.5 1528.7,799.0" stroke-width="25.0"/>
<path d="M1560.0,697.1 C1556.8,696.7 1547.1,695.5 1540.7,694.6 C1534.3,693.8 1527.8,693.0 1521.4,692.1 C1514.9,691.3 1508.5,690.5 1502.1,689.6 C1495.6,688.8 1489.2,688.0 1482.8,687.1 C1476.3,686.3 1469.9,685.5 1463.4,684.6 C1457.0,683.8 1450.6,683.0 1444.1,682.2 C1437.7,681.3 1431.3,680.5 1424.8,679.7 C1418.4,678.8 1412.0,678.0 1405.5,677.2 C1399.1,676.3 1392.6,675.5 1386.2,674.7 C1379.8,673.8 1373.3,673.0 1366.9,672.2 C1360.5,671.3 1354.0,670.5 1347.6,669.7 C1341.1,668.9 1334.7,668.0 1328.3,667.2 C1321.8,666.4 1315.4,665.5 1309.0,664.7 C1302.5,663.9 1296.1,663.0 1289.7,662.2 C1283.2,661.4 1276.8,660.5 1270.3,659.7 C1263.9,658.9 1257.5,658.0 1251.0,657.2 C1244.6,656.4 1238.2,655.6 1231.7,654.7 C1225.3,653.9 1218.9,653.1 1212.4,652.2 C1206.0,651.4 1199.5,650.6 1193.1,649.7 C1186.7,648.9 1180.2,648.1 1173.8,647.2 C1167.4,646.4 1160.9,645.6 1154.5,644.8 C1148.0,643.9 1141.6,643.1 1135.2,642.3 C1128.7,641.4 1122.3,640.6 1115.9,639.8 C1109.4,638.9 1103.0,638.1 1096.6,637.3 C1090.1,636.4 1083.7,635.6 1077.2,634.8 C1070.8,633.9 1064.4,633.1 1057.9,632.3 C1051.5,631.5 1045.1,630.6 1038.6,629.8 C1032.2,629.0 1025.7,628.1 1019.3,627.3 C1012.9,626.5 1003.2,625.2 1000.0,624.8" stroke-width="21"/>
<path d="M1000.5,614.3 L1000,614.3 C949.3,614.3 949.3,691.9 1000,691.9 L1000.5,691.9 L1000.5,666.9 L1000,666.9 C970.7,666.9 970.7,635.3 1000,635.3 L1000.5,635.3 Z" stroke="none" fill="#fff" fill-opacity="0.52"/>
<path d="M1000.0,679.4 C1003.3,679.7 1013.2,680.8 1019.9,681.6 C1026.5,682.3 1033.1,683.0 1039.7,683.8 C1046.4,684.5 1053.0,685.3 1059.6,686.0 C1066.2,686.8 1072.9,687.5 1079.5,688.3 C1086.1,689.1 1092.7,689.8 1099.4,690.6 C1106.0,691.4 1112.6,692.2 1119.2,693.0 C1125.9,693.7 1132.5,694.5 1139.1,695.3 C1145.7,696.1 1152.4,696.9 1159.0,697.8 C1165.6,698.6 1172.2,699.4 1178.9,700.2 C1185.5,701.0 1192.1,701.9 1198.7,702.7 C1205.4,703.5 1212.0,704.4 1218.6,705.2 C1225.2,706.1 1231.9,706.9 1238.5,707.8 C1245.1,708.6 1251.7,709.5 1258.4,710.4 C1265.0,711.2 1271.6,712.1 1278.2,713.0 C1284.9,713.9 1291.5,714.8 1298.1,715.6 C1304.7,716.5 1311.4,717.4 1318.0,718.3 C1324.6,719.2 1331.2,720.2 1337.9,721.1 C1344.5,722.0 1351.1,722.9 1357.7,723.8 C1364.4,724.8 1371.0,725.7 1377.6,726.6 C1384.2,727.6 1390.8,728.5 1397.5,729.5 C1404.1,730.4 1410.7,731.4 1417.3,732.3 C1424.0,733.3 1430.6,734.2 1437.2,735.2 C1443.8,736.2 1450.5,737.2 1457.1,738.1 C1463.7,739.1 1470.3,740.1 1477.0,741.1 C1483.6,742.1 1490.2,743.1 1496.8,744.1 C1503.5,745.1 1510.1,746.1 1516.7,747.2 C1523.3,748.2 1533.3,749.7 1536.6,750.2" stroke-width="25"/>
</g></g>
</g></svg>
<div id="bar" class="abs"></div>
<svg class="abs" style="left:0;top:0" width="1920" height="1088" viewBox="0 0 1920 1088">
<g clip-path="url(#gc)">
<g fill="none" stroke="#f0f0f0" stroke-opacity="0.8" stroke-width="1.2" stroke-dasharray="16 17">
<path d="M1016.5,100.0 C1015.7,101.7 1013.4,106.6 1011.8,109.9 C1010.2,113.2 1008.7,116.6 1007.1,119.9 C1005.6,123.2 1004.0,126.5 1002.4,129.8 C1000.9,133.1 999.3,136.4 997.8,139.8 C996.2,143.1 994.7,146.4 993.1,149.7 C991.6,153.0 990.0,156.3 988.5,159.6 C986.9,162.9 985.4,166.2 983.8,169.6 C982.3,172.9 980.7,176.2 979.2,179.5 C977.7,182.8 976.1,186.1 974.6,189.4 C973.0,192.8 971.5,196.1 970.0,199.4 C968.5,202.7 966.9,206.0 965.4,209.3 C963.9,212.6 962.4,215.9 960.8,219.2 C959.3,222.6 957.8,225.9 956.3,229.2 C954.8,232.5 953.2,235.8 951.7,239.1 C950.2,242.4 948.7,245.8 947.1,249.1 C945.6,252.4 944.1,255.7 942.5,259.0 C941.0,262.3 939.4,265.6 937.9,268.9 C936.3,272.2 934.7,275.6 933.2,278.9 C931.6,282.2 930.0,285.5 928.4,288.8 C926.8,292.1 925.2,295.4 923.6,298.8 C922.0,302.1 920.4,305.4 918.7,308.7 C917.1,312.0 915.4,315.3 913.8,318.6 C912.1,321.9 910.4,325.2 908.8,328.6 C907.1,331.9 905.4,335.2 903.7,338.5 C902.0,341.8 900.3,345.1 898.6,348.4 C896.9,351.8 895.1,355.1 893.4,358.4 C891.7,361.7 890.0,365.0 888.2,368.3 C886.5,371.6 884.7,374.9 883.0,378.2 C881.3,381.6 879.5,384.9 877.8,388.2 C876.0,391.5 874.2,394.8 872.5,398.1 C870.7,401.4 869.0,404.8 867.2,408.1 C865.5,411.4 862.8,416.3 862.0,418.0"/>
<path d="M1029.6,247.0 C1028.9,248.6 1026.7,253.4 1025.3,256.7 C1023.9,259.9 1022.4,263.1 1021.0,266.3 C1019.6,269.6 1018.2,272.8 1016.8,276.0 C1015.4,279.2 1014.0,282.4 1012.5,285.7 C1011.1,288.9 1009.7,292.1 1008.3,295.3 C1006.9,298.6 1005.5,301.8 1004.0,305.0 C1002.6,308.2 1001.2,311.4 999.7,314.7 C998.3,317.9 996.9,321.1 995.4,324.3 C993.9,327.6 992.5,330.8 991.0,334.0 C989.6,337.2 988.1,340.4 986.6,343.7 C985.1,346.9 983.6,350.1 982.2,353.3 C980.7,356.6 979.2,359.8 977.7,363.0 C976.1,366.2 974.6,369.4 973.1,372.7 C971.6,375.9 970.1,379.1 968.5,382.3 C967.0,385.6 965.4,388.8 963.9,392.0 C962.3,395.2 960.8,398.4 959.2,401.7 C957.6,404.9 956.0,408.1 954.5,411.3 C952.9,414.6 951.3,417.8 949.7,421.0 C948.1,424.2 946.5,427.4 944.9,430.7 C943.3,433.9 941.7,437.1 940.1,440.3 C938.6,443.6 936.2,448.4 935.4,450.0"/>
<path d="M667.1,790.0 C666.2,791.6 663.3,796.4 661.5,799.7 C659.6,802.9 657.7,806.1 655.8,809.3 C653.8,812.5 651.9,815.7 650.0,819.0 C648.1,822.2 646.1,825.4 644.2,828.6 C642.3,831.8 640.3,835.1 638.4,838.3 C636.4,841.5 634.4,844.7 632.5,847.9 C630.5,851.1 628.5,854.4 626.5,857.6 C624.5,860.8 622.5,864.0 620.6,867.2 C618.6,870.5 616.5,873.7 614.5,876.9 C612.5,880.1 610.5,883.3 608.5,886.6 C606.5,889.8 604.4,893.0 602.4,896.2 C600.4,899.4 598.3,902.6 596.3,905.9 C594.2,909.1 592.2,912.3 590.1,915.5 C588.1,918.7 586.0,922.0 584.0,925.2 C581.9,928.4 579.8,931.6 577.8,934.8 C575.7,938.0 573.6,941.3 571.5,944.5 C569.5,947.7 567.4,950.9 565.3,954.1 C563.2,957.4 561.1,960.6 559.0,963.8 C556.9,967.0 554.8,970.2 552.7,973.4 C550.6,976.7 548.5,979.9 546.4,983.1 C544.3,986.3 542.2,989.5 540.1,992.8 C538.0,996.0 535.9,999.2 533.8,1002.4 C531.7,1005.6 529.6,1008.9 527.5,1012.1 C525.3,1015.3 523.2,1018.5 521.1,1021.7 C519.0,1024.9 516.9,1028.2 514.8,1031.4 C512.6,1034.6 510.5,1037.8 508.4,1041.0 C506.3,1044.3 504.2,1047.5 502.0,1050.7 C499.9,1053.9 497.8,1057.1 495.7,1060.3 C493.6,1063.6 490.4,1068.4 489.3,1070.0"/>
<path d="M722.9,850.0 C721.9,851.6 719.0,856.4 717.1,859.6 C715.2,862.8 713.3,865.9 711.3,869.1 C709.4,872.3 707.5,875.5 705.5,878.7 C703.6,881.9 701.7,885.1 699.7,888.3 C697.8,891.4 695.8,894.6 693.8,897.8 C691.9,901.0 689.9,904.2 687.9,907.4 C686.0,910.6 684.0,913.8 682.0,917.0 C680.0,920.1 678.0,923.3 676.1,926.5 C674.1,929.7 672.1,932.9 670.1,936.1 C668.1,939.3 666.1,942.5 664.1,945.7 C662.1,948.8 660.0,952.0 658.0,955.2 C656.0,958.4 654.0,961.6 652.0,964.8 C650.0,968.0 647.9,971.2 645.9,974.3 C643.9,977.5 641.9,980.7 639.8,983.9 C637.8,987.1 635.8,990.3 633.7,993.5 C631.7,996.7 629.7,999.9 627.6,1003.0 C625.6,1006.2 623.5,1009.4 621.5,1012.6 C619.5,1015.8 617.4,1019.0 615.4,1022.2 C613.3,1025.4 611.3,1028.6 609.2,1031.7 C607.2,1034.9 605.1,1038.1 603.1,1041.3 C601.0,1044.5 599.0,1047.7 596.9,1050.9 C594.9,1054.1 592.8,1057.2 590.8,1060.4 C588.8,1063.6 585.7,1068.4 584.7,1070.0"/>
<path d="M729.2,888.0 C728.2,889.6 725.2,894.5 723.2,897.8 C721.2,901.0 719.2,904.3 717.2,907.6 C715.2,910.8 713.2,914.1 711.2,917.4 C709.1,920.6 707.1,923.9 705.1,927.2 C703.1,930.4 701.0,933.7 699.0,937.0 C697.0,940.2 694.9,943.5 692.9,946.8 C690.8,950.0 688.8,953.3 686.7,956.6 C684.7,959.8 682.6,963.1 680.6,966.3 C678.5,969.6 676.5,972.9 674.4,976.1 C672.3,979.4 670.3,982.6 668.2,985.9 C666.1,989.2 664.0,992.4 662.0,995.7 C659.9,998.9 657.8,1002.2 655.7,1005.4 C653.7,1008.7 651.6,1012.0 649.5,1015.2 C647.4,1018.5 645.3,1021.7 643.3,1025.0 C641.2,1028.2 639.1,1031.5 637.0,1034.7 C634.9,1038.0 632.8,1041.3 630.7,1044.5 C628.7,1047.8 626.6,1051.0 624.5,1054.3 C622.4,1057.5 620.3,1060.8 618.2,1064.0 C616.1,1067.3 614.0,1070.5 612.0,1073.8 C609.9,1077.0 606.7,1081.9 605.7,1083.5"/>
</g>
<g fill="none" stroke="#f0f0f0" stroke-opacity="0.85" stroke-width="1.8" stroke-dasharray="16 17"><path d="M999.0,613.9 C1002.3,614.4 1012.2,615.6 1018.8,616.5 C1025.5,617.3 1032.1,618.2 1038.7,619.0 C1045.3,619.9 1051.9,620.8 1058.5,621.6 C1065.2,622.5 1071.8,623.3 1078.4,624.2 C1085.0,625.0 1091.6,625.9 1098.2,626.7 C1104.8,627.6 1111.5,628.4 1118.1,629.3 C1124.7,630.2 1131.3,631.0 1137.9,631.9 C1144.5,632.7 1151.2,633.6 1157.8,634.4 C1164.4,635.3 1171.0,636.1 1177.6,637.0 C1184.2,637.8 1190.8,638.7 1197.5,639.6 C1204.1,640.4 1210.7,641.3 1217.3,642.1 C1223.9,643.0 1230.5,643.8 1237.2,644.7 C1243.8,645.5 1250.4,646.4 1257.0,647.2 C1263.6,648.1 1270.2,648.9 1276.8,649.8 C1283.5,650.7 1290.1,651.5 1296.7,652.4 C1303.3,653.2 1309.9,654.1 1316.5,654.9 C1323.2,655.8 1329.8,656.6 1336.4,657.5 C1343.0,658.3 1349.6,659.2 1356.2,660.1 C1362.8,660.9 1369.5,661.8 1376.1,662.6 C1382.7,663.5 1389.3,664.3 1395.9,665.2 C1402.5,666.0 1409.2,666.9 1415.8,667.7 C1422.4,668.6 1429.0,669.4 1435.6,670.3 C1442.2,671.2 1448.8,672.0 1455.5,672.9 C1462.1,673.7 1468.7,674.6 1475.3,675.4 C1481.9,676.3 1488.5,677.1 1495.2,678.0 C1501.8,678.8 1511.7,680.1 1515.0,680.6"/><path d="M1018.0,693.9 C1021.2,694.2 1030.7,695.3 1037.1,696.0 C1043.5,696.7 1049.8,697.4 1056.2,698.1 C1062.6,698.9 1068.9,699.6 1075.3,700.3 C1081.7,701.0 1088.0,701.8 1094.4,702.5 C1100.8,703.3 1107.1,704.0 1113.5,704.8 C1119.9,705.5 1126.2,706.3 1132.6,707.1 C1139.0,707.8 1145.3,708.6 1151.7,709.4 C1158.1,710.1 1164.4,710.9 1170.8,711.7 C1177.2,712.5 1183.5,713.3 1189.9,714.1 C1196.3,714.9 1202.6,715.7 1209.0,716.5 C1215.4,717.3 1221.7,718.1 1228.1,718.9 C1234.5,719.8 1240.8,720.6 1247.2,721.4 C1253.6,722.2 1259.9,723.1 1266.3,723.9 C1272.7,724.7 1279.0,725.6 1285.4,726.4 C1291.8,727.3 1298.1,728.1 1304.5,729.0 C1310.9,729.9 1317.2,730.7 1323.6,731.6 C1330.0,732.5 1336.3,733.4 1342.7,734.2 C1349.1,735.1 1355.4,736.0 1361.8,736.9 C1368.2,737.8 1374.5,738.7 1380.9,739.6 C1387.3,740.5 1396.8,741.9 1400.0,742.3"/><path d="M1015.0,718.5 C1018.2,718.9 1027.8,719.9 1034.2,720.6 C1040.5,721.4 1046.9,722.1 1053.3,722.8 C1059.7,723.5 1066.1,724.3 1072.5,725.0 C1078.8,725.7 1085.2,726.5 1091.6,727.2 C1098.0,727.9 1104.4,728.7 1110.8,729.5 C1117.1,730.2 1123.5,731.0 1129.9,731.7 C1136.3,732.5 1142.7,733.3 1149.0,734.0 C1155.4,734.8 1161.8,735.6 1168.2,736.4 C1174.6,737.2 1181.0,738.0 1187.3,738.8 C1193.7,739.6 1200.1,740.4 1206.5,741.2 C1212.9,742.0 1219.3,742.8 1225.7,743.6 C1232.0,744.4 1238.4,745.3 1244.8,746.1 C1251.2,746.9 1257.6,747.8 1264.0,748.6 C1270.3,749.4 1276.7,750.3 1283.1,751.1 C1289.5,752.0 1295.9,752.8 1302.2,753.7 C1308.6,754.6 1315.0,755.4 1321.4,756.3 C1327.8,757.2 1334.2,758.1 1340.5,758.9 C1346.9,759.8 1353.3,760.7 1359.7,761.6 C1366.1,762.5 1372.5,763.4 1378.8,764.3 C1385.2,765.2 1394.8,766.6 1398.0,767.0"/></g>
<path d="M873.7,421.8 C870.2,430.3 857.5,452.0 852.8,472.6 C848.1,493.2 844.8,525.1 845.6,545.3 C846.4,565.5 851.0,579.1 857.5,593.8 C864.0,608.5 872.8,621.7 884.7,633.5 C896.6,645.3 914.1,657.0 928.8,664.4 C943.5,671.8 959.8,674.9 973.0,677.6 C986.2,680.3 1002.3,680.2 1008.2,680.7" fill="none" stroke="#fff" stroke-width="3"/>
<path d="M893,719 Q945,710 999,718.5" fill="none" stroke="#3fb24c" stroke-width="3"/>
<path d="M811,392.5 L987.5,465.5 L1040,572 L988,766 L838,808 L660,701 Z" fill="none" stroke="#dfd7c8" stroke-width="1.7"/>
<g fill="none" stroke="#e2e26a" stroke-width="1.6">
<path d="M1072.5,109.2 L1117.5,134 L1057,244.8 L1012,220 Z M1095,121.6 L1034.5,232.4"/>
<path d="M1411.6,719.4 L1538,738 L1527,813.75 L1401,795 Z M1410,746 L1533.4,763 M1407,771 L1530,788"/>
</g>
<g fill="none" stroke="#dcdcdc" stroke-width="2" stroke-linecap="round">
<path d="M1844,765 L1630,755 M1642.6,746 L1630,755 L1642.6,766"/>
<path d="M1906,833 L1644,775 M1657,766 L1644,775 L1655,787"/>
<path d="M1698.6,830 L1588,803 M1601,795 L1588,803 L1598,816"/>
<path d="M1122.7,58.3 L1124.8,70.8 L1139.4,64.2 M1124.8,70.8 L1134,58"/>
<path d="M1186,82.3 L1240,57"/>
</g>
</g>
</svg><!--/ROADS-->
<div id="bottom" class="abs"></div>

<div class="tb g1" style="left:382px">File<br>New</div>
<div class="tb g1" style="left:437px">File<br>Open</div>
<div class="tb g1" style="left:492px">File<br>Save</div>
<div class="tb g1" style="left:547px">File<br>Reload</div>
<div class="tb g2" style="left:613px">Way</div>
<div class="tb g2" style="left:668px">Stream</div>
<div class="tb g2" style="left:723px">Modal<br>Split</div>
<div class="tb g3" style="left:788px">Poly</div>
<div class="tb g3" style="left:843px">Line</div>
<div class="tb g3" style="left:898px">Sign</div>
<div class="tb g3" style="left:953px">Zebra</div>
<div class="tb g4" style="left:1017px">Stop<br>(serve)</div>
<div class="tb g4" style="left:1072px">Speed<br>Brk</div>
<div class="tb g5" style="left:1137px">Ctrl<br>Area</div>
<div class="tb g5" style="left:1192px">Priority<br>Ctrl</div>
<div class="tb g5" style="left:1247px">Signal<br>Ctrl</div>
<div class="tb g6" style="left:1312px">Sim</div>
<div class="tb g6" style="left:1367px">BGM</div>
<div class="tb g7" style="left:1431px">Hot<br>Keys</div>
<div class="tb g7" style="left:1486px">Help</div>
<div id="bartxt" class="abs">79 m, 30 m</div>


<div id="panel" class="abs"></div>
<div id="ptitle" class="abs">Signal: X0</div>
<div id="pclose" class="abs">X</div>
<div class="row" style="top:229.5px"><span class="lab">Name</span><div class="inp">X0</div><div class="btn w2">Set</div></div>
<div class="row" style="top:274.8px"><span class="lab">Phases</span><div class="inp">3</div><div class="btn w2">Set</div></div>
<div class="row" style="top:330.5px"><span class="lab">Phase:</span><div class="inp">3</div><div class="btn b1">&lt;</div><div class="btn b2">&gt;</div></div>
<div class="row" style="top:375.8px"><span class="lab">Green (s):</span><div class="inp">25</div><div class="btn b1">+</div><div class="btn b2">-</div></div>
<div class="row" style="top:421.1px"><span class="lab">Yellow (s):</span><div class="inp">3</div><div class="btn b1">+</div><div class="btn b2">-</div></div>
<div class="row" style="top:466.4px"><span class="lab">Red (s):</span><div class="inp">2</div><div class="btn b1">+</div><div class="btn b2">-</div></div>
<div class="row" style="top:521.5px"><span class="lab">Control Area:</span><div class="inp">CA1</div><div class="btn b1">&lt;</div><div class="btn b2">&gt;</div></div>
<div class="row" style="top:566.8px"><span class="lab">Stream:</span><div class="inp">EN</div><div class="btn b1">&lt;</div><div class="btn b2">&gt;</div></div>
<div class="row" style="top:612.1px"><span class="lab">Permit:</span><div class="inp go">Go</div><div class="btn w2">Change</div></div>
<div class="pb" style="left:1667px">Done</div>
<div class="pb" style="left:1757px">Discard</div>


<div class="abs" style="left:1272px;top:58px;width:85px;height:4px;background:#3a2bc8"></div>
<div class="sq" style="left:700px;top:300.5px;background:#cacd4a;color:#858741">CA1</div>
<div class="sq" style="left:653px;top:371.5px;background:#c4c4c4;color:#7f74e2">PC1</div>
<div class="sq" style="left:686.5px;top:438px;background:#6e63d8;color:#f4f4ff">X0</div>
<div class="blk" style="left:1844px;top:724px;width:85px;height:85px;line-height:85px">EN</div>
<div class="blk" style="left:1699px;top:798px;width:84.5px;height:85.5px;line-height:85.5px">ES</div>
<div class="blk" style="left:1906px;top:800px;width:20px;height:85.5px"></div><div class="abs" style="left:1906px;top:800px;width:14px;height:9px;background:#4a3ddc"></div>
<div id="logo" class="abs"></div>
<svg class="abs" style="left:0;top:0" width="1920" height="200"><g fill="none" stroke="#7b705b" stroke-linejoin="miter"><path d="M1855,114 V98.5 L1859.3,109 L1863.6,98.5 V114" stroke-width="3.2"/><path d="M1873.8,95 C1868.5,97.5 1869.5,103 1871.5,107 C1873.5,111 1872.5,116 1869,117.8" stroke-width="2.6" stroke-linecap="round"/><path d="M1879.6,98 L1883.4,113.6 L1887.3,98" stroke-width="3.2"/></g></svg>
<div id="mouse" class="abs">Mouse Left</div>
<div id="dev" class="abs">Development Build</div>
<div id="log" class="abs"></div>
<div id="logt" class="abs">15:07:43&gt;  Stream NS is not set to Green or Free in any of the phases at signal X0
15:07:43&gt;  Stream SE is not set to Green or Free in any of the phases at signal X0
15:07:43&gt;  Stream NE is not set to Green or Free in any of the phases at signal X0
15:07:43&gt;  Stream ES is not set to Green or Free in any of the phases at signal X0
15:07:43&gt;  Stream EN is not set to Green or Free in any of the phases at signal X0</div>
<svg class="abs" style="left:0;top:0" width="1920" height="1088">
<g fill="none" stroke="#dcdcdc" stroke-width="1.6" stroke-linecap="round" stroke-opacity="0.9">
<path d="M1619,664 L1710,652 M1697.5,662 L1710,652"/>
<path d="M1663,684 L1816.6,670 M1802,663 L1816.6,670 L1804.5,682"/>
<path d="M1607,699.6 L1667,705"/>
</g>
<path d="M1749,705.5 v12.5 M1749,706.5 h9 M1749,711.8 h8 M1749,717 h9" stroke="#d2da98" stroke-width="1.8" fill="none"/>
<path d="M1806.5,637.5 L1806.5,653 L1810,649.5 L1813,656 L1815.5,655 L1812.8,648.5 L1817.5,648.5 Z" fill="#fff" stroke="#222" stroke-width="1"/>
<g stroke="#1a1a1a" stroke-width="1.1" fill="none">
<path d="M1764.5,42.5 h11.5"/>
<path d="M1822.5,40.5 h9 v9 h-9 z M1824.5,40.5 v-3 h9 v9 h-2" stroke-width="1"/>
<path d="M1881,37 L1893,49 M1893,37 L1881,49"/>
</g>
</svg>
<div class="pb" style="left:1757px">Discard</div>
<div id="hl" class="abs"></div>
<div class="abs" style="left:1919px;top:29px;width:1px;height:1037px;background:#3c3f4e"></div>
</body></html>
